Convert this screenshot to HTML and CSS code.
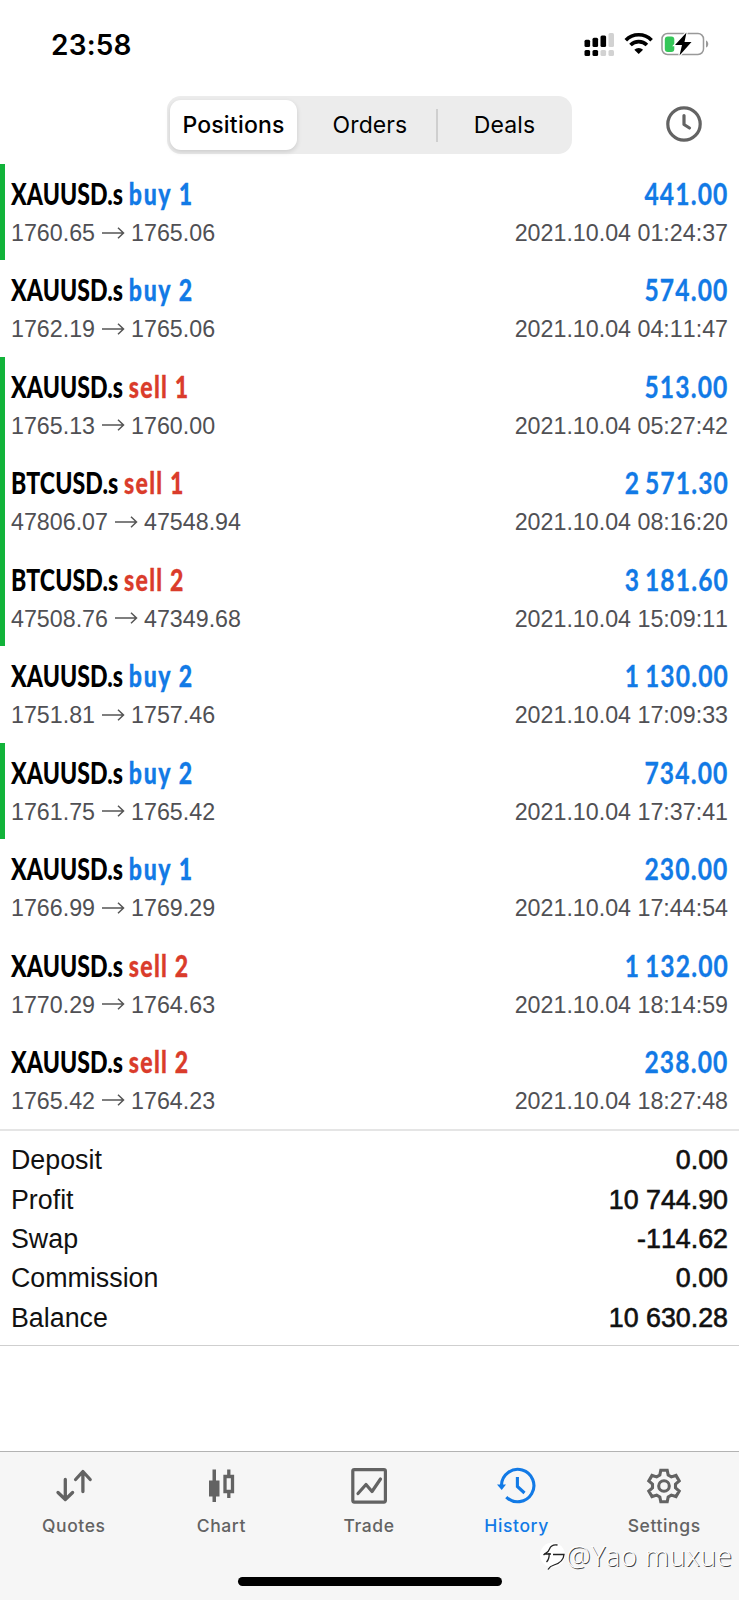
FILE: index.html
```html
<!DOCTYPE html>
<html lang="en">
<head>
<meta charset="utf-8">
<title>History</title>
<link rel="stylesheet" href="styles.css">
</head>
<body>
<div class="app">
  <header class="status">
    <span class="time">23:58</span>
    <svg class="status-icons" width="126" height="27" viewBox="0 0 126 27">
      <g fill="#000">
        <rect x="0.500" y="9.800" width="5.600" height="7.200" rx="1.500"/>
        <rect x="8.500" y="7.800" width="5.600" height="9.200" rx="1.500"/>
        <rect x="16.500" y="5.500" width="5.600" height="11.500" rx="1.500"/>
        <rect x="0.500" y="20" width="5.600" height="6" rx="1.500"/>
        <rect x="8.500" y="20" width="5.600" height="6" rx="1.500"/>
      </g>
      <g fill="#d2d2d2">
        <rect x="24.500" y="3" width="5.500" height="14" rx="1.500"/>
        <rect x="16.500" y="20" width="5.600" height="6" rx="1.500"/>
        <rect x="24.500" y="20" width="5.500" height="6" rx="1.500"/>
      </g>
      <g fill="none" stroke="#000" stroke-width="3.600">
        <path d="M41.800 10.200a18 18 0 0 1 25.800 0"/>
        <path d="M46.500 15.100a11.500 11.500 0 0 1 16.400 0"/>
      </g>
      <path d="M50.300 19.700a6.300 6.300 0 0 1 8.800 0L54.700 24.100z" fill="#000"/>
      <rect x="78" y="3.500" width="41.500" height="21" rx="5.500" fill="none" stroke="#999" stroke-width="1.500"/>
      <path d="M122 10.500v7c3-1 3-6 0-7z" fill="#999"/>
      <rect x="80.800" y="6.500" width="9.500" height="15.500" rx="3" fill="#35c759"/>
      <path d="M102.500 2.500L91 15H98L95.500 25.500L107.500 12H100.500z" fill="#000" stroke="#fff" stroke-width="2.500" paint-order="stroke"/>
    </svg>
  </header>

  <nav class="topbar">
    <div class="segments">
      <div class="segment selected">Positions</div>
      <div class="segment">Orders</div>
      <div class="segment last">Deals</div>
    </div>
    <svg class="clock" width="36" height="36" viewBox="0 0 36 36" fill="none" stroke="#636363">
      <circle cx="18" cy="18" r="16.200" stroke-width="3.200"/>
      <path d="M18 9.500V18.500L23.500 22" stroke-width="3.200" stroke-linecap="round" stroke-linejoin="round"/>
    </svg>
  </nav>

  <main class="list">
    <div class="row marked"><div class="line"><div class="title"><b class="xau">XAUUSD.s</b> <b class="buy">buy 1</b></div><b class="amount">441.00</b></div><div class="line detail"><div class="prices">1760.65<svg class="arrow"><use href="#arrow"/></svg>1765.06</div><span>2021.10.04 01:24:37</span></div></div>
    <div class="row"><div class="line"><div class="title"><b class="xau">XAUUSD.s</b> <b class="buy">buy 2</b></div><b class="amount">574.00</b></div><div class="line detail"><div class="prices">1762.19<svg class="arrow"><use href="#arrow"/></svg>1765.06</div><span>2021.10.04 04:11:47</span></div></div>
    <div class="row marked"><div class="line"><div class="title"><b class="xau">XAUUSD.s</b> <b class="sell">sell 1</b></div><b class="amount">513.00</b></div><div class="line detail"><div class="prices">1765.13<svg class="arrow"><use href="#arrow"/></svg>1760.00</div><span>2021.10.04 05:27:42</span></div></div>
    <div class="row marked"><div class="line"><div class="title"><b class="btc">BTCUSD.s</b> <b class="sell">sell 1</b></div><b class="amount">2 571.30</b></div><div class="line detail"><div class="prices">47806.07<svg class="arrow"><use href="#arrow"/></svg>47548.94</div><span>2021.10.04 08:16:20</span></div></div>
    <div class="row marked"><div class="line"><div class="title"><b class="btc">BTCUSD.s</b> <b class="sell">sell 2</b></div><b class="amount">3 181.60</b></div><div class="line detail"><div class="prices">47508.76<svg class="arrow"><use href="#arrow"/></svg>47349.68</div><span>2021.10.04 15:09:11</span></div></div>
    <div class="row"><div class="line"><div class="title"><b class="xau">XAUUSD.s</b> <b class="buy">buy 2</b></div><b class="amount">1 130.00</b></div><div class="line detail"><div class="prices">1751.81<svg class="arrow"><use href="#arrow"/></svg>1757.46</div><span>2021.10.04 17:09:33</span></div></div>
    <div class="row marked"><div class="line"><div class="title"><b class="xau">XAUUSD.s</b> <b class="buy">buy 2</b></div><b class="amount">734.00</b></div><div class="line detail"><div class="prices">1761.75<svg class="arrow"><use href="#arrow"/></svg>1765.42</div><span>2021.10.04 17:37:41</span></div></div>
    <div class="row"><div class="line"><div class="title"><b class="xau">XAUUSD.s</b> <b class="buy">buy 1</b></div><b class="amount">230.00</b></div><div class="line detail"><div class="prices">1766.99<svg class="arrow"><use href="#arrow"/></svg>1769.29</div><span>2021.10.04 17:44:54</span></div></div>
    <div class="row"><div class="line"><div class="title"><b class="xau">XAUUSD.s</b> <b class="sell">sell 2</b></div><b class="amount">1 132.00</b></div><div class="line detail"><div class="prices">1770.29<svg class="arrow"><use href="#arrow"/></svg>1764.63</div><span>2021.10.04 18:14:59</span></div></div>
    <div class="row"><div class="line"><div class="title"><b class="xau">XAUUSD.s</b> <b class="sell">sell 2</b></div><b class="amount">238.00</b></div><div class="line detail"><div class="prices">1765.42<svg class="arrow"><use href="#arrow"/></svg>1764.23</div><span>2021.10.04 18:27:48</span></div></div>
  </main>

  <section class="summary">
    <div class="total"><span>Deposit</span><span class="value">0.00</span></div>
    <div class="total"><span>Profit</span><span class="value">10 744.90</span></div>
    <div class="total"><span>Swap</span><span class="value">-114.62</span></div>
    <div class="total"><span>Commission</span><span class="value">0.00</span></div>
    <div class="total"><span>Balance</span><span class="value">10 630.28</span></div>
  </section>

  <footer class="tabbar">
    <div class="tabs">
      <div class="tab">
        <svg width="40" height="40" viewBox="0 0 40 40" fill="none" stroke="#636363" stroke-width="3.300" stroke-linecap="round" stroke-linejoin="round"><path d="M11.300 14.500V33.500M4 27.500L11.300 34.500L18.600 27.500M28.900 26.500V7M21.600 14.500L28.900 6.500L36.200 14.500"/></svg>
        <span>Quotes</span>
      </div>
      <div class="tab">
        <svg width="40" height="40" viewBox="0 0 40 40"><path d="M11.500 4.500h3.500v11h3.500v16H15v5.500h-3.500v-5.500H8v-16h3.500z" fill="#636363"/><path d="M27.800 4.500v6M27.800 27v6M24 11.500h7.500v15H24z" fill="none" stroke="#636363" stroke-width="3.300"/></svg>
        <span>Chart</span>
      </div>
      <div class="tab">
        <svg width="40" height="40" viewBox="0 0 40 40" fill="none" stroke="#636363" stroke-width="3.200" stroke-linejoin="round"><rect x="3.800" y="4.600" width="32.600" height="32.500" rx="1.500"/><path d="M9 28.500L17 19.500L23 26.500L31.500 14" stroke-linecap="round"/></svg>
        <span>Trade</span>
      </div>
      <div class="tab active">
        <svg width="40" height="40" viewBox="0 0 40 40" fill="none" stroke="#127ae6" stroke-width="3.100"><path d="M4.500 20A16.200 16.200 0 1 1 9.300 32.100"/><path d="M0 19.500H9L4.700 25z" fill="#127ae6" stroke="none"/><path d="M20.400 12v9.500L27.500 28"/></svg>
        <span>History</span>
      </div>
      <div class="tab">
        <svg width="40" height="40" viewBox="0 0 40 40"><g transform="translate(20 21)" fill="none" stroke="#636363" stroke-width="3.100"><path d="M-3.200-15.700H3.200L4.200-10.900L7.300-9.100L12-10.600L15.200-5.100L11.500-1.800V1.800L15.200 5.100L12 10.600L7.300 9.100L4.200 10.900L3.200 15.700H-3.200L-4.200 10.900L-7.300 9.100L-12 10.600L-15.200 5.100L-11.500 1.800V-1.800L-15.200-5.100L-12-10.600L-7.300-9.100L-4.200-10.900z"/><circle r="5.300"/></g></svg>
        <span>Settings</span>
      </div>
    </div>
    <div class="home"></div>
    <div class="watermark">
      <svg width="27" height="30" viewBox="0 0 27 30"><circle cx="13.500" cy="14" r="12.500" fill="#fff"/><path d="M4.500 14C7 11.500 9 12 10.500 8C11.800 4.500 14 3.300 18.500 4M5 13H12M14 13.500H25C24.500 20 20 22.500 15 24C11.500 25 10.500 26 9 28.500M10 12C10.500 16 9.500 19 7.500 21" fill="none" stroke="#222" stroke-width="1.300"/></svg>
      <span>@Yao muxue</span>
    </div>
  </footer>
</div>
<svg class="defs" width="0" height="0"><symbol id="arrow" viewBox="0 0 36 20"><path d="M7 9H28.500M23 3.800L28.500 9L23 14.200" fill="none" stroke="#555" stroke-width="1.500"/></symbol></svg>
</body>
</html>
```

FILE: styles.css
```css
* { box-sizing: border-box; }
body { margin: 0; background: #fff; }
.app {
  width: 739px; height: 1600px; overflow: hidden;
  display: flex; flex-direction: column;
  font-family: "Liberation Sans", Arial, sans-serif; font-kerning: none; color: #111;
}
.defs { display: none; }

.status {
  height: 88px; flex: none; display: flex; justify-content: space-between;
  padding: 30px 27px 0 51px;
}
.time { font: 600 28px/30px Inter, sans-serif; letter-spacing: .2px; color: #000; }
.status-icons { margin-right: 2px; }

.topbar { height: 76px; flex: none; display: flex; align-items: flex-start; padding: 8px 37px 0 167px; }
.segments {
  width: 405px; height: 58px; padding: 4px 4px 4px 3px; border-radius: 14px;
  background: #ececec; display: flex; align-items: center;
}
.segment { width: 137px; text-align: center; font: 400 23px/33px Inter, sans-serif; letter-spacing: .1px; color: #000; }
.segment.last { flex: 1; border-left: 2px solid #cfcfcf; padding-left: 3px; }
.selected {
  width: 127px; height: 50px; line-height: 50px; border-radius: 11px;
  background: #fff; box-shadow: 0 2px 5px rgba(0, 0, 0, .14); font-weight: 500; letter-spacing: .2px;
}
.segment:nth-child(2) { margin-left: 2px; padding-left: 5px; }
.clock { margin: 10px 0 0 auto; }

.list { height: 965px; flex: none; display: flex; flex-direction: column; }
.row { height: 96.45px; padding: 10px 11px 0 6px; border-left: 5px solid transparent; }
.marked { border-left-color: #12b33a; }
.line { display: flex; justify-content: space-between; height: 39px; align-items: center; }
.title, .amount { font: 700 30px/39px Lato, sans-serif; white-space: nowrap; }
.title { transform: scaleX(.77); transform-origin: left; color: #000; letter-spacing: .1px; }
.amount { transform: scaleX(.82); transform-origin: right; color: #127ae6; letter-spacing: 1.4px; word-spacing: -3px; margin-right: -1px; -webkit-text-stroke: .3px #127ae6; }
.title .buy { color: #127ae6; letter-spacing: 2.1px; -webkit-text-stroke: .3px #127ae6; }
.title .sell { color: #da3c2b; letter-spacing: 1.6px; -webkit-text-stroke: .3px #da3c2b; }
.detail { height: 41px; font-size: 23.25px; color: #505054; }
.prices { display: flex; align-items: center; }
.arrow { width: 36px; height: 20px; }

.summary {
  height: 217px; flex: none; padding: 10px 11px 0;
  border-top: 2px solid #e5e5e5; border-bottom: 1px solid #cfcfcf;
}
.total { height: 39.35px; display: flex; justify-content: space-between; align-items: center; font-size: 26.8px; }
.value { -webkit-text-stroke: .6px #111; }

.tabbar { position: relative; margin-top: auto; height: 149px; flex: none; background: #f6f6f6; border-top: 1px solid #b3b3b3; }
.tabs { display: grid; grid-template-columns: repeat(5, 1fr); padding: 13px 1px 0 0; }
.tab { display: flex; flex-direction: column; align-items: center; font: 500 17.5px/24px Inter, sans-serif; letter-spacing: .6px; color: #636363; }
.tab span { margin-top: 9px; }
.active { color: #127ae6; }
.home { width: 264px; height: 9px; margin: 39px auto 0; border-radius: 5px; background: #000; }
.watermark {
  position: absolute; left: 539px; top: 89px; display: flex; align-items: center;
  font: 300 27.500px/30px "Open Sans", sans-serif; letter-spacing: .4px; color: #fff; text-shadow: 1px 1px 0 #444;
}
```
